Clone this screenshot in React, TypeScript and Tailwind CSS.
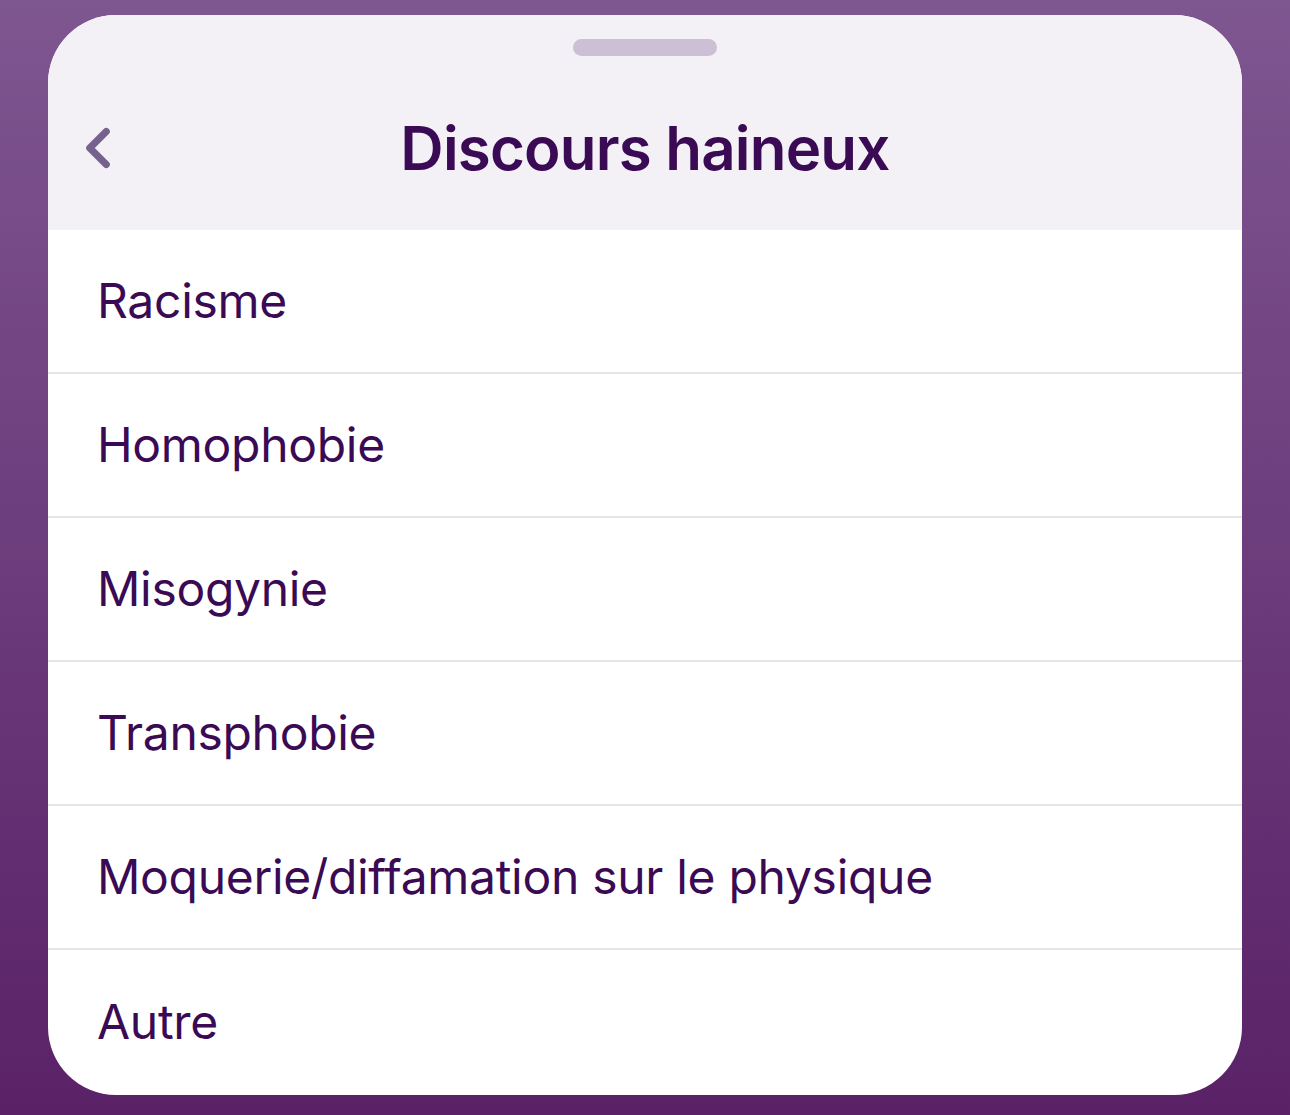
import { ChevronLeft } from "lucide-react";

const items = [
  "Racisme",
  "Homophobie",
  "Misogynie",
  "Transphobie",
  "Moquerie/diffamation sur le physique",
  "Autre",
];

export default function App() {
  return (
    <div
      className="w-[1290px] h-[1115px] overflow-hidden bg-gradient-to-b from-[#7e5690] to-[#5a2167] pt-[15px] pl-[48px]"
      style={{ fontFamily: "Inter, 'Noto Sans', sans-serif" }}
    >
      <div className="w-[1194px] h-[1080px] rounded-[68px] overflow-hidden bg-white flex flex-col">
        {/* header */}
        <div className="h-[215px] bg-[#f3f0f6] relative flex items-center justify-center shrink-0">
          <div className="absolute top-[24px] left-1/2 -translate-x-1/2 w-[144px] h-[17px] rounded-full bg-[#cdc0d6]" />
          <button className="absolute left-[17px] top-[100px] text-[#76628e]">
            <ChevronLeft size={66} strokeWidth={2.6} />
          </button>
          <h1 className="mt-[50px] text-[60px] font-semibold tracking-[-0.8px] text-[#3b0a55]">
            Discours haineux
          </h1>
        </div>
        {/* list */}
        <div className="flex flex-col">
          {items.map((item, i) => (
            <div
              key={item}
              className={`h-[144px] flex items-center pl-[49px] ${
                i < items.length - 1 ? "border-b-2 border-[#e6e4e8]" : ""
              }`}
            >
              <span className="text-[48px] text-[#3b0a55] tracking-[-0.3px]">{item}</span>
            </div>
          ))}
        </div>
      </div>
    </div>
  );
}
